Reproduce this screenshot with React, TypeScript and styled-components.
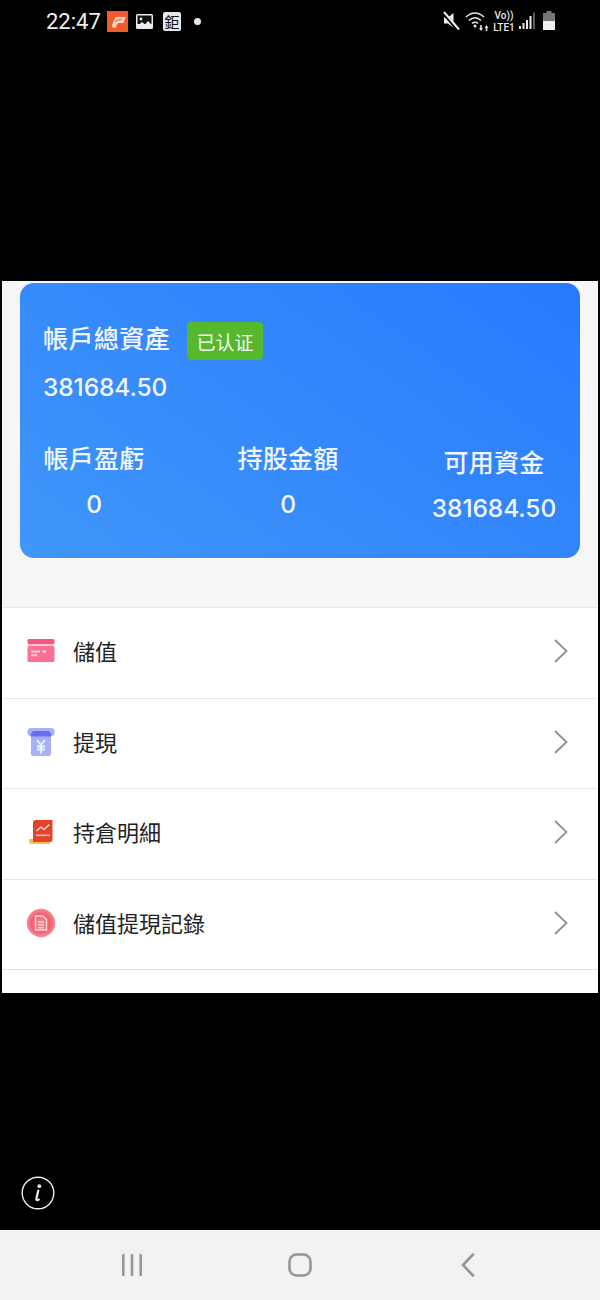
import React from "react";
import styled, { createGlobalStyle } from "styled-components";

const Global = createGlobalStyle`
  html, body { margin: 0; padding: 0; background: #000; }
  * { box-sizing: border-box; }
`;

const CJK = `"Noto Sans CJK TC", "Noto Sans CJK SC", "Noto Sans", sans-serif`;

const Screen = styled.div`
  width: 600px;
  height: 1300px;
  background: #000;
  display: flex;
  flex-direction: column;
  overflow: hidden;
  font-family: Inter, ${CJK};
`;

const StatusBar = styled.div`
  height: 44px;
  padding: 9px 45px 0 46px;
  display: flex;
  align-items: flex-start;
  justify-content: space-between;
  color: #eee;
`;

const StatusLeft = styled.div`
  display: flex;
  align-items: center;
  gap: 7px;
  height: 24px;
`;

const StatusRight = styled.div`
  display: flex;
  align-items: center;
  gap: 4px;
  height: 24px;
`;

const Clock = styled.span`
  font-family: Roboto, sans-serif;
  font-size: 22px;
  font-weight: 400;
  width: 54px;
  color: #f0f0f0;
`;

const Notif = styled.div`
  width: 21px;
  height: 21px;
  flex: none;
`;

const NotifDot = styled.div`
  width: 7px;
  height: 7px;
  border-radius: 50%;
  background: #e8e8e8;
  margin-left: 6px;
`;

const NetLabel = styled.div`
  font-family: Roboto, sans-serif;
  font-size: 10px;
  line-height: 12px;
  font-weight: 500;
  color: #e8e8e8;
  text-align: center;
  width: 22px;
  padding-top: 2px;
`;

const Panel = styled.main`
  margin: 237px 2px 0;
  height: 712px;
  background: #fff;
  display: flex;
  flex-direction: column;
`;

const Hero = styled.section`
  background: #f6f6f6;
  height: 326px;
  padding: 2px 18px 0;
  flex: none;
`;

const Card = styled.div`
  height: 275px;
  border-radius: 14px;
  background: linear-gradient(35deg, #4097fa 0%, #3488fb 50%, #287afe 100%);
  color: #f2f6ff;
  padding: 38px 23px 0;
  display: flex;
  flex-direction: column;
`;

const TitleRow = styled.div`
  display: flex;
  align-items: center;
  height: 40px;
`;

const Title = styled.h2`
  margin: 0 0 8px;
  font-family: ${CJK};
  font-size: 25px;
  font-weight: 500;
  letter-spacing: 0.4px;
  line-height: 32px;
  width: 144px;
`;

const Badge = styled.span`
  width: 76px;
  height: 38px;
  border-radius: 4px;
  background: #55b82e;
  color: #f4fbef;
  font-family: "Noto Sans CJK SC", sans-serif;
  font-size: 19px;
  display: flex;
  align-items: center;
  justify-content: center;
`;

const Total = styled.div`
  font-size: 24.5px;
  font-weight: 500;
  line-height: 30px;
  margin-top: 11px;
  letter-spacing: -0.1px;
`;

const Stats = styled.div`
  margin-top: 38px;
  display: grid;
  grid-template-columns: 102px 1fr 126px;
  align-items: start;
`;

const Stat = styled.div<{ $drop?: boolean }>`
  display: flex;
  flex-direction: column;
  align-items: center;
  margin-top: ${(p) => (p.$drop ? "4px" : "0")};
`;

const StatLabel = styled.div`
  font-family: ${CJK};
  font-size: 25px;
  font-weight: 500;
  line-height: 34px;
  letter-spacing: 0.2px;
  white-space: nowrap;
`;

const StatValue = styled.div`
  font-size: 24.5px;
  font-weight: 500;
  line-height: 30px;
  margin-top: 15px;
  letter-spacing: -0.1px;
`;

const Row = styled.a`
  height: 90.6px;
  flex: none;
  border-top: 1px solid #e8e8e8;
  display: flex;
  align-items: center;
  padding: 0 29px 3px 24px;
  color: #222;
  text-decoration: none;
`;

const IconBox = styled.span`
  width: 30px;
  height: 30px;
  display: flex;
  align-items: center;
  justify-content: center;
  flex: none;
`;

const RowLabel = styled.span`
  font-family: ${CJK};
  font-size: 22px;
  margin-left: 17px;
  margin-bottom: 2px;
  flex: 1;
`;

const LastLine = styled.div`
  border-top: 1px solid #e2e2e2;
`;

const InfoWrap = styled.div`
  flex: 1;
  display: flex;
  align-items: flex-end;
  padding: 0 0 20px 21px;
`;

const NavBar = styled.nav`
  height: 70px;
  background: #f2f2f2;
  display: grid;
  grid-template-columns: 264px 72px 264px;
  flex: none;
`;

const NavSlot = styled.div`
  display: flex;
  align-items: center;
  justify-content: center;
`;

const Chevron = () => (
  <svg width="16" height="26" viewBox="0 0 16 26" fill="none">
    <path d="M2 2 L13.5 13 L2 24" stroke="#8f8f8f" strokeWidth="1.8" />
  </svg>
);

const CardIcon = () => (
  <svg width="30" height="30" viewBox="0 0 30 30">
    <rect x="1.5" y="3" width="27" height="5" rx="1.5" fill="#f4577f" />
    <rect x="1.5" y="8" width="27" height="2" fill="#ffc4d3" />
    <rect x="1.5" y="10" width="27" height="16" rx="1.5" fill="#fb6f94" />
    <rect x="5" y="14.5" width="9" height="2.2" fill="#ffc2d2" />
    <rect x="5" y="18" width="6" height="2.2" fill="#ffc2d2" />
    <rect x="16.5" y="14.5" width="3.5" height="2.2" fill="#ffd8e2" />
  </svg>
);

const WithdrawIcon = () => (
  <svg width="30" height="30" viewBox="0 0 30 30">
    <rect x="5" y="5" width="20" height="24" rx="2.5" fill="#a6b0f5" />
    <rect x="1.5" y="1" width="27" height="8" rx="3.5" fill="#a6b0f5" />
    <path d="M4.5 9.5 Q5 4 8 4 H22 Q25 4 25.5 9.5 Z" fill="#6a6cf0" />
    <path d="M11 13 L15 18 L19 13 M11 19.5 H19 M11 22.5 H19 M15 18 V26.5" stroke="#f1f2ff" strokeWidth="1.9" fill="none" />
  </svg>
);

const HoldIcon = () => (
  <svg width="30" height="30" viewBox="0 0 30 30">
    <path d="M3 22 H24 V27 H5 Q3 27 3 24 Z" fill="#f9c03b" />
    <path d="M7 6 Q7 3 10 3 H26.5 V23 Q26.5 25 24.5 25 H7 Z" fill="#e2432e" />
    <path d="M10.5 14 L15 10 L18 12.5 L23.5 7.5" stroke="#f8d2c4" strokeWidth="1.6" fill="none" />
    <rect x="10" y="17.5" width="14" height="1.6" fill="#f6b9a7" />
  </svg>
);

const RecordIcon = () => (
  <svg width="30" height="30" viewBox="0 0 30 30">
    <defs>
      <radialGradient id="recordFill" cx="50%" cy="50%" r="50%">
        <stop offset="0%" stopColor="#f58a95" />
        <stop offset="65%" stopColor="#f0606f" />
        <stop offset="100%" stopColor="#f78b99" />
      </radialGradient>
    </defs>
    <circle cx="15" cy="15" r="14.2" fill="url(#recordFill)" />
    <path d="M9.5 8 H17 L20.5 11.5 V22 H9.5 Z" fill="none" stroke="#fbd3d7" strokeWidth="1.5" />
    <path d="M12 14 H18 M12 17 H18 M12 19.7 H18" stroke="#fbd3d7" strokeWidth="1.4" />
  </svg>
);

const PIcon = () => (
  <svg width="21" height="21" viewBox="0 0 21 21">
    <rect width="21" height="21" fill="#ef5a2e" />
    <path d="M5 16 Q6 9 9 6 H18 Q19 6 18 8 L16.5 12 H11 Q9.5 14 8.5 17 Z" fill="#fbd3c4" />
    <path d="M8 11 Q10 8.5 15 8.5" stroke="#ef7a55" strokeWidth="1.4" fill="none" />
  </svg>
);

const ImageIcon = () => (
  <svg width="19" height="19" viewBox="0 0 19 19">
    <rect x="1" y="2" width="17" height="15" rx="1.5" fill="#ececec" />
    <rect x="2.5" y="3.5" width="14" height="8.5" fill="#111" />
    <circle cx="6" cy="7" r="1.4" fill="#ececec" />
    <path d="M2.5 14 L7 10 L10 12.5 L13 9 L16.5 12.5 V15 H2.5 Z" fill="#ececec" />
  </svg>
);

const CharIcon = styled.span`
  width: 18px;
  height: 19px;
  background: #e8e8e8;
  border-radius: 2px;
  color: #111;
  font-family: "Noto Sans CJK TC", sans-serif;
  font-size: 15px;
  line-height: 19px;
  text-align: center;
  margin-left: 2px;
  flex: none;
`;

const Mute = () => (
  <svg width="18" height="20" viewBox="0 0 18 20">
    <path d="M1 6.5 H5 L10.5 2 V16.5 L5 12.5 H1 Z" fill="#efefef" />
    <path d="M0.5 2 L15 19" stroke="#000" strokeWidth="3.5" />
    <path d="M1 1 L16 18.5" stroke="#efefef" strokeWidth="2" />
  </svg>
);

const Wifi = () => (
  <svg width="24" height="22" viewBox="0 0 24 22" fill="none">
    <path d="M1 7 Q10 -1 19 7 M4 10.5 Q10 5 16 10.5 M7 13.5 Q10 11 13 13.5" stroke="#e8e8e8" strokeWidth="1.6" />
    <circle cx="10" cy="16" r="1.5" fill="#e8e8e8" />
    <path d="M14 18 L16 21 L18 18 Z M19.5 18 L21.5 15 L23.5 18 Z" fill="#e8e8e8" />
    <rect x="15.2" y="15" width="1.6" height="3" fill="#e8e8e8" />
    <rect x="20.7" y="18" width="1.6" height="3" fill="#e8e8e8" />
  </svg>
);

const Signal = () => (
  <svg width="16" height="18" viewBox="0 0 16 18">
    <rect x="0" y="14" width="2" height="3" fill="#e8e8e8" />
    <rect x="3.5" y="11" width="2" height="6" fill="#e8e8e8" />
    <rect x="7" y="8" width="2" height="9" fill="#e8e8e8" />
    <rect x="10.5" y="4" width="2" height="13" fill="#e8e8e8" />
    <rect x="14" y="0.5" width="1.8" height="16.5" fill="#666" />
  </svg>
);

const Battery = () => (
  <svg width="12" height="20" viewBox="0 0 12 20">
    <rect x="3.5" y="0" width="5" height="2" fill="#777" />
    <rect x="0" y="2" width="12" height="8" fill="#777" />
    <rect x="0" y="10" width="12" height="9" fill="#f0f0f0" />
  </svg>
);

const SignalGap = styled.span`
  width: 0;
  flex: none;
`;

const InfoIcon = () => (
  <svg width="34" height="34" viewBox="0 0 34 34" fill="none">
    <circle cx="17" cy="17" r="15.8" stroke="#ededed" strokeWidth="1.4" />
    <circle cx="18.3" cy="10.2" r="1.9" fill="#f2f2f2" />
    <path d="M17.3 14.5 L15.4 22.6 Q15.2 25 17.8 23.6" stroke="#f2f2f2" strokeWidth="2.2" strokeLinecap="round" />
  </svg>
);

const RecentIcon = () => (
  <svg width="24" height="24" viewBox="0 0 24 24" fill="#969696">
    <rect x="2" y="1" width="2.6" height="22" rx="1" />
    <rect x="10.7" y="1" width="2.6" height="22" rx="1" />
    <rect x="19.4" y="1" width="2.6" height="22" rx="1" />
  </svg>
);

const HomeIcon = () => (
  <svg width="24" height="24" viewBox="0 0 24 24" fill="none">
    <rect x="1.5" y="1.5" width="21" height="21" rx="7" stroke="#969696" strokeWidth="2.6" />
  </svg>
);

const BackIcon = () => (
  <svg width="16" height="26" viewBox="0 0 16 26" fill="none">
    <path d="M13 2.5 L3 13 L13 23.5" stroke="#969696" strokeWidth="2.6" strokeLinecap="round" />
  </svg>
);

const rows = [
  { label: "儲值", icon: <CardIcon /> },
  { label: "提現", icon: <WithdrawIcon /> },
  { label: "持倉明細", icon: <HoldIcon /> },
  { label: "儲值提現記錄", icon: <RecordIcon /> },
];

export default function App() {
  return (
    <Screen>
      <Global />
      <StatusBar>
        <StatusLeft>
          <Clock>22:47</Clock>
          <Notif><PIcon /></Notif>
          <ImageIcon />
          <CharIcon>鉅</CharIcon>
          <NotifDot />
        </StatusLeft>
        <StatusRight>
          <Mute />
          <Wifi />
          <NetLabel>Vo))<br />LTE1</NetLabel>
          <Signal />
          <SignalGap />
          <Battery />
        </StatusRight>
      </StatusBar>
      <Panel>
        <Hero>
          <Card>
            <TitleRow>
              <Title>帳戶總資產</Title>
              <Badge>已认证</Badge>
            </TitleRow>
            <Total>381684.50</Total>
            <Stats>
              <Stat><StatLabel>帳戶盈虧</StatLabel><StatValue>0</StatValue></Stat>
              <Stat><StatLabel>持股金額</StatLabel><StatValue>0</StatValue></Stat>
              <Stat $drop><StatLabel>可用資金</StatLabel><StatValue>381684.50</StatValue></Stat>
            </Stats>
          </Card>
        </Hero>
        {rows.map((r) => (
          <Row key={r.label}>
            <IconBox>{r.icon}</IconBox>
            <RowLabel>{r.label}</RowLabel>
            <Chevron />
          </Row>
        ))}
        <LastLine />
      </Panel>
      <InfoWrap><InfoIcon /></InfoWrap>
      <NavBar>
        <NavSlot><RecentIcon /></NavSlot>
        <NavSlot><HomeIcon /></NavSlot>
        <NavSlot><BackIcon /></NavSlot>
      </NavBar>
    </Screen>
  );
}
